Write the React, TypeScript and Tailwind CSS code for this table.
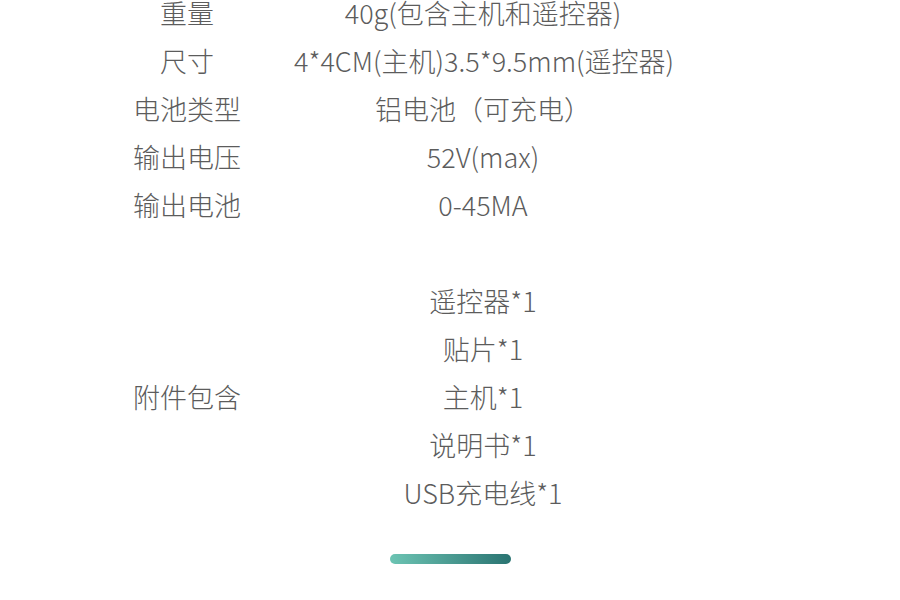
const specs = [
  { label: "重量", value: "40g(包含主机和遥控器)" },
  { label: "尺寸", value: "4*4CM(主机)3.5*9.5mm(遥控器)" },
  { label: "电池类型", value: "铝电池（可充电）" },
  { label: "输出电压", value: "52V(max)" },
  { label: "输出电池", value: "0-45MA" },
];

const accessories = ["遥控器*1", "贴片*1", "主机*1", "说明书*1", "USB充电线*1"];

export default function App() {
  return (
    <div
      className="w-[900px] h-[600px] overflow-hidden bg-white text-[#5c5c5c] text-[27px] font-light"
      style={{ fontFamily: '"Noto Sans CJK SC", "Noto Sans", sans-serif' }}
    >
      <div className="-mt-[11px] flex flex-col">
        {specs.map((s) => (
          <div key={s.label} className="flex h-[48px] items-center">
            <div className="ml-[80px] w-[214px] text-center">{s.label}</div>
            <div className="w-[378px] text-center whitespace-nowrap">{s.value}</div>
          </div>
        ))}
        <div className="h-[48px]" />
        <div className="flex items-center">
          <div className="ml-[80px] w-[214px] text-center">附件包含</div>
          <div className="w-[378px] flex flex-col">
            {accessories.map((a) => (
              <div key={a} className="h-[48px] flex items-center justify-center">
                {a}
              </div>
            ))}
          </div>
        </div>
        <div className="mt-[37px] flex justify-center">
          <div className="ml-[1px] w-[121px] h-[10px] rounded-full bg-gradient-to-r from-[#6cc4b3] to-[#2a7472]" />
        </div>
      </div>
    </div>
  );
}
